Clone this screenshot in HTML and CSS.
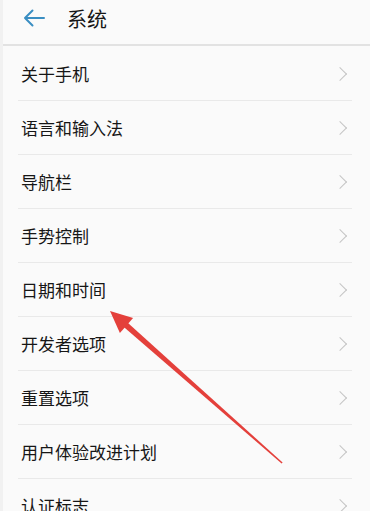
FILE: index.html
```html
<!DOCTYPE html>
<html lang="zh-CN">
<head>
  <meta charset="UTF-8">
  <meta name="viewport" content="width=device-width, initial-scale=1.0">
  <title>系统</title>
  <link rel="stylesheet" href="styles.css">
</head>
<body>
  <div class="screen">
    <!-- Title bar -->
    <div class="topbar">
      <svg class="back" width="22" height="18" viewBox="0 0 22 18">
        <path d="M21 9H2M9.5 1.5L2 9l7.5 7.5" fill="none" stroke="#3a8ec2" stroke-width="2" stroke-linecap="round" stroke-linejoin="round"/>
      </svg>
      <span class="title">系统</span>
    </div>

    <!-- Settings list -->
    <ul class="settings">
      <li><span>关于手机</span><i class="chev"></i></li>
      <li><span>语言和输入法</span><i class="chev"></i></li>
      <li><span>导航栏</span><i class="chev"></i></li>
      <li><span>手势控制</span><i class="chev"></i></li>
      <li><span>日期和时间</span><i class="chev"></i></li>
      <li><span>开发者选项</span><i class="chev"></i></li>
      <li><span>重置选项</span><i class="chev"></i></li>
      <li><span>用户体验改进计划</span><i class="chev"></i></li>
      <li><span>认证标志</span><i class="chev"></i></li>
    </ul>

    <!-- Annotation arrow drawn over the list -->
    <svg class="pointer" width="370" height="511" viewBox="0 0 370 511">
      <polygon points="121.5,325.1 125.5,320.7 282.6,462.4 281.6,463.6" fill="#e4403b"/>
      <polygon points="110,311 133.1,318.1 119.9,333.1" fill="#e4403b"/>
    </svg>
  </div>
</body>
</html>
```

FILE: styles.css
```css
body {
  margin: 0;
  padding: 0;
  background-color: #fafafa;
  font-family: "Noto Sans CJK SC", "Noto Sans", sans-serif;
  color: #161616;
}
.screen {
  position: relative;
  width: 370px;
  height: 511px;
  overflow: hidden;
  border-left: 3px solid #f1f1f1;
  box-sizing: border-box;
}
.topbar {
  height: 46px;
  display: flex;
  align-items: center;
  padding: 0 0 8px 20px;
  box-sizing: border-box;
  background-color: #fafafa;
  border-bottom: 2px solid #e2e2e2;
}
.back {
  margin-right: 22px;
}
.title {
  font-size: 20px;
}
.settings {
  list-style-type: none;
  margin: 1px 18px 0 15px;
  padding: 0;
}
.settings li {
  height: 54px;
  display: flex;
  align-items: center;
  justify-content: space-between;
  padding: 0 3px;
  box-sizing: border-box;
  border-bottom: 1px solid #e9e9e9;
  font-size: 17px;
}
.chev {
  width: 9px;
  height: 9px;
  border-top: 1.3px solid #c4c4c4;
  border-right: 1.3px solid #c4c4c4;
  transform: rotate(45deg);
  margin-right: 4px;
}
.pointer {
  position: absolute;
  left: -3px;
  top: 0;
}
```
